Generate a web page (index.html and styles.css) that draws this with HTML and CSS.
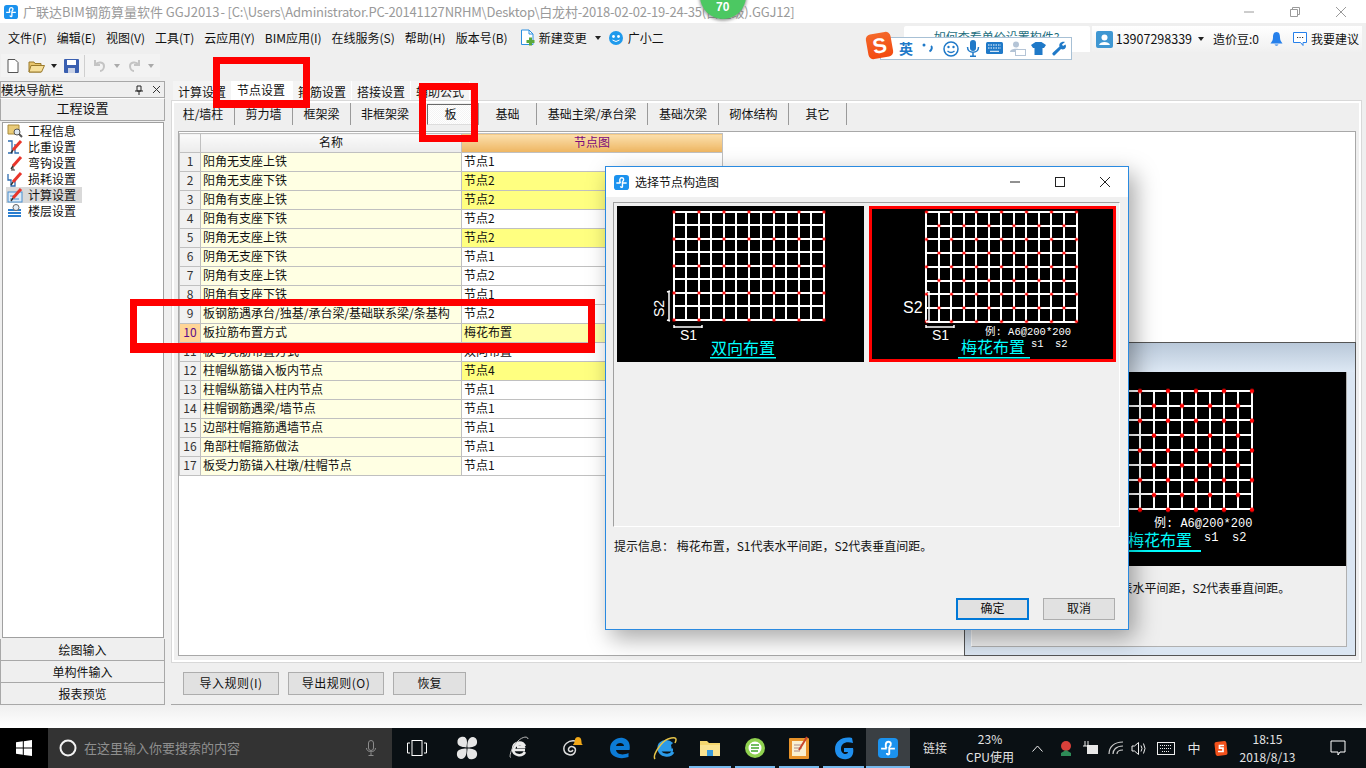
FILE: index.html
```html
<!DOCTYPE html>
<html lang="zh-CN">
<head>
<meta charset="utf-8">
<title>广联达BIM钢筋算量软件 GGJ2013</title>
<link rel="stylesheet" href="styles.css">
</head>
<body>
<svg class="defs" width="0" height="0" aria-hidden="true">
  <defs>
    <symbol id="glodon" viewBox="0 0 16 16">
      <rect width="16" height="16" rx="3" fill="#1b92ee"/>
      <path d="M2.500 8.500H7M7 8.500C5.500 6.500 6 3 8.300 3S11 5.500 9 7M9 7V12.500M9 8.500H13.500M9 12.500C9 13.500 7 13.500 7 12" fill="none" stroke="#fff" stroke-width="1.500"/>
    </symbol>
    <symbol id="pencil" viewBox="0 0 16 16">
      <path d="M6 11L14 2" stroke="#e8352b" stroke-width="3"/>
      <path d="M6 11L4 14" stroke="#333" stroke-width="1.400"/>
    </symbol>
    <pattern id="dotA" x="44.500" y="-7.500" width="25" height="27" patternUnits="userSpaceOnUse"><path d="M11 13.500h3M12.500 12v3" stroke="#f00" stroke-width="1.800"/></pattern>
    <pattern id="dotB" x="51.250" y="-.85" width="25" height="27.400" patternUnits="userSpaceOnUse"><path d="M4.750 6.850h3M6.250 5.350v3M17.250 20.550h3M18.750 19.050v3" stroke="#f00" stroke-width="1.800"/></pattern>
    <pattern id="dotC" x="105" y="11.600" width="28" height="29.700" patternUnits="userSpaceOnUse"><circle cx="7" cy="7.400" r="2.200" fill="#f00"/><circle cx="21" cy="22.250" r="2.200" fill="#f00"/></pattern>
  </defs>
</svg>

<div class="app">
  <header class="titlebar">
    <svg class="app-ico"><use href="#glodon"/></svg>
    <span class="title-text">广联达BIM钢筋算量软件 GGJ2013 <span class="title-path">- [C:\Users\Administrator.PC-20141127NRHM\Desktop\白龙村-2018-02-02-19-24-35(白金级).GGJ12]</span></span>
    <div class="winctl">
      <svg width="12" height="12" viewBox="0 0 12 12"><path d="M1 6H11" stroke="#9a9a9a"/></svg>
      <svg width="12" height="12" viewBox="0 0 12 12"><path d="M1.500 3.500H8.500V10.500H1.500ZM3.500 3.500V1.500H10.500V8.500H8.500" fill="none" stroke="#9a9a9a"/></svg>
      <svg width="12" height="12" viewBox="0 0 12 12"><path d="M1 1L11 11M11 1L1 11" stroke="#9a9a9a"/></svg>
    </div>
  </header>

  <nav class="menubar">
    <div class="menu">
      <span>文件(F)</span><span>编辑(E)</span><span>视图(V)</span><span>工具(T)</span><span>云应用(Y)</span><span>BIM应用(I)</span><span>在线服务(S)</span><span>帮助(H)</span><span>版本号(B)</span>
    </div>
    <div class="menu-extra change">
      <svg width="15" height="17" viewBox="0 0 15 17"><path d="M1.500 1H9L13 5V15.500H1.500Z" fill="#fff" stroke="#2b8fe0"/><path d="M9 1V5H13" fill="none" stroke="#2b8fe0"/><path d="M9 8.500h3v2.500h2.500v3H12v2.500H9V14H6.500v-3H9Z" fill="#5aa83a"/></svg>
      <span>新建变更</span><i class="caret"></i>
    </div>
    <div class="menu-extra xiao">
      <svg width="16" height="16" viewBox="0 0 16 16"><circle cx="8" cy="8" r="7" fill="#1f9aec"/><circle cx="5.500" cy="6.500" r="1.400" fill="#fff"/><circle cx="10.500" cy="6.500" r="1.400" fill="#fff"/><path d="M4.500 10Q8 13 11.500 10" stroke="#fff" fill="none"/></svg>
      <span>广小二</span>
    </div>
    <div class="tip"><span>如何查看单价设置构件?</span></div>
    <div class="user">
      <svg width="17" height="17" viewBox="0 0 17 17"><rect width="17" height="17" rx="2" fill="#3f97d2"/><circle cx="8.500" cy="6.500" r="3" fill="#fff"/><path d="M3 14C4 10 13 10 14 14Z" fill="#fff"/></svg>
      <span class="phone">13907298339</span><i class="caret"></i>
      <span class="beans">造价豆:0</span>
      <svg class="bell" width="13" height="16" viewBox="0 0 13 16"><path d="M6.500 1C3.500 1 3 4 3 6.500S2 10.500 .5 12.500H12.500C11 10.500 10 9 10 6.500S9.500 1 6.500 1Z" fill="#2680eb"/><path d="M4.500 13.500Q6.500 16 8.500 13.500Z" fill="#2680eb"/></svg>
      <svg class="chat" width="16" height="16" viewBox="0 0 16 16"><path d="M1.500 1.500H14.500V11.500H11V14.500L8.500 11.500H1.500Z" fill="#fff" stroke="#2680eb"/><path d="M5 6.500h1.200M7.500 6.500h1.200M10 6.500h1.200" stroke="#333"/></svg>
      <span>我要建议</span>
    </div>
  </nav>

  <div class="toolbar">
    <div class="tools">
      <svg width="12" height="14" viewBox="0 0 12 14"><path d="M1 .5H8L11 3.500V13.500H1Z" fill="#fff" stroke="#555"/></svg>
      <svg class="t-open" width="17" height="14" viewBox="0 0 17 14"><path d="M1 3H6L7 4.500H13V13H1Z" fill="#e8c56d" stroke="#9a7a2c"/><path d="M3 6.500H16.500L13.500 13H1Z" fill="#f6df9a" stroke="#9a7a2c"/></svg>
      <i class="caret t-c1"></i>
      <svg class="t-save" width="15" height="14" viewBox="0 0 15 14"><rect width="15" height="14" rx="1" fill="#3a5fb0"/><rect x="3" y="1" width="9" height="5" fill="#fff"/><rect x="4" y="9" width="7" height="5" fill="#c9d2e6"/></svg>
      <span class="t-sep"></span>
      <svg class="t-undo" width="13" height="13" viewBox="0 0 13 13"><path d="M2 1V6H7M2 6C5 2 11 3 11 7C11 10 9 12 7 12" fill="none" stroke="#c4c4c4" stroke-width="2"/></svg>
      <i class="caret t-off t-c2"></i>
      <svg class="t-redo" width="13" height="13" viewBox="0 0 13 13"><path d="M11 1V6H6M11 6C8 2 2 3 2 7C2 10 4 12 6 12" fill="none" stroke="#c4c4c4" stroke-width="2"/></svg>
      <i class="caret t-off t-c3"></i>
    </div>
  </div>

  <main class="main">
    <aside class="nav">
      <div class="nav-head"><span>模块导航栏</span>
        <svg class="pin" width="10" height="10" viewBox="0 0 10 10"><path d="M3 1H7V6H3ZM1 6H9M5 6V10" fill="none" stroke="#222"/></svg>
        <svg width="9" height="9" viewBox="0 0 9 9"><path d="M1 1L8 8M8 1L1 8" stroke="#333"/></svg>
      </div>
      <div class="nav-btn">工程设置</div>
      <ul class="tree">
        <li><svg width="16" height="16" viewBox="0 0 16 16"><path d="M1 2H12V11H1Z" fill="#e9cb78" stroke="#a98a3a"/><circle cx="10" cy="9" r="3" fill="#dfe9f3" stroke="#555"/><path d="M12 11L15 14" stroke="#555" stroke-width="2"/></svg>工程信息</li>
        <li><svg width="16" height="16" viewBox="0 0 16 16"><path d="M1 2H5V14H1M12 14H8V5" fill="none" stroke="#2d6cb0" stroke-width="1.300"/><use href="#pencil"/></svg>比重设置</li>
        <li><svg width="16" height="16" viewBox="0 0 16 16"><path d="M6 10V15M4 15H8" stroke="#333"/><use href="#pencil"/></svg>弯钩设置</li>
        <li><svg width="16" height="16" viewBox="0 0 16 16"><path d="M1 3V9H4V15H8V9" fill="none" stroke="#2d6cb0" stroke-width="1.300"/><use href="#pencil"/></svg>损耗设置</li>
        <li class="sel"><svg width="16" height="16" viewBox="0 0 16 16"><rect x="1" y="5" width="14" height="10" fill="#dcebf8" stroke="#4a90d0"/><path d="M3 9H9M3 12H12" stroke="#4a90d0"/><use href="#pencil"/></svg>计算设置</li>
        <li><svg width="16" height="16" viewBox="0 0 16 16"><path d="M1 7H14M1 10H14M1 13H14" stroke="#2a7ed0" stroke-width="2"/><circle cx="9" cy="4.500" r="3" fill="#e6eef6" stroke="#666"/></svg>楼层设置</li>
      </ul>
      <div class="nav-foot">绘图输入</div>
      <div class="nav-foot">单构件输入</div>
      <div class="nav-foot">报表预览</div>
    </aside>

    <section class="content">
      <div class="tabs">
        <span class="tab">计算设置</span><span class="tab active">节点设置</span><span class="tab">箍筋设置</span><span class="tab">搭接设置</span><span class="tab">辅助公式</span>
      </div>
      <div class="tabpanel">
        <div class="subtabs">
          <span>柱/墙柱</span><span>剪力墙</span><span>框架梁</span><span>非框架梁</span><span><b class="sub-active">板</b></span><span>基础</span><span>基础主梁/承台梁</span><span>基础次梁</span><span>砌体结构</span><span>其它</span>
        </div>
        <div class="sheet">
          <table class="grid">
            <colgroup><col class="c-no"><col class="c-name"><col class="c-val"></colgroup>
            <thead><tr><th></th><th>名称</th><th class="h-val">节点图</th></tr></thead>
            <tbody>
              <tr><td>1</td><td>阳角无支座上铁</td><td>节点1</td></tr>
              <tr><td>2</td><td>阳角无支座下铁</td><td class="y">节点2</td></tr>
              <tr><td>3</td><td>阳角有支座上铁</td><td class="y">节点2</td></tr>
              <tr><td>4</td><td>阳角有支座下铁</td><td>节点2</td></tr>
              <tr><td>5</td><td>阴角无支座上铁</td><td class="y">节点2</td></tr>
              <tr><td>6</td><td>阴角无支座下铁</td><td>节点1</td></tr>
              <tr><td>7</td><td>阴角有支座上铁</td><td>节点2</td></tr>
              <tr><td>8</td><td>阴角有支座下铁</td><td>节点1</td></tr>
              <tr><td>9</td><td>板钢筋遇承台/独基/承台梁/基础联系梁/条基构</td><td>节点2</td></tr>
              <tr class="cur"><td>10</td><td>板拉筋布置方式</td><td class="ly">梅花布置</td></tr>
              <tr><td>11</td><td>板马凳筋布置方式</td><td>双向布置</td></tr>
              <tr><td>12</td><td>柱帽纵筋锚入板内节点</td><td class="y">节点4</td></tr>
              <tr><td>13</td><td>柱帽纵筋锚入柱内节点</td><td>节点1</td></tr>
              <tr><td>14</td><td>柱帽钢筋遇梁/墙节点</td><td>节点1</td></tr>
              <tr><td>15</td><td>边部柱帽箍筋遇墙节点</td><td>节点1</td></tr>
              <tr><td>16</td><td>角部柱帽箍筋做法</td><td>节点1</td></tr>
              <tr><td>17</td><td>板受力筋锚入柱墩/柱帽节点</td><td>节点1</td></tr>
            </tbody>
          </table>

          <div class="backwin">
            <div class="backwin-title"></div>
            <div class="backwin-body">
              <svg class="back-img" width="374" height="194" viewBox="0 0 374 194">
                <rect width="374" height="194" fill="#000"/>
                <path d="M112 19V137M126 19V137M140 19V137M154 19V137M168 19V137M182 19V137M196 19V137M210 19V137M224 19V137M238 19V137M252 19V137M266 19V137M280 19V137M112 19H280M112 34H280M112 48H280M112 63H280M112 78H280M112 93H280M112 108H280M112 122H280M112 137H280" stroke="#fff" stroke-width="2"/>
                <rect x="105" y="11.600" width="182" height="133.700" fill="url(#dotC)"/>
                <text class="pic-w" x="182" y="155">例: A6@200*200</text>
                <text class="pic-w" x="232" y="169">s1</text><text class="pic-w" x="260" y="169">s2</text>
                <text class="pic-c" x="156" y="174">梅花布置</text>
                <rect x="120" y="178" width="109" height="2" fill="#0ff"/>
              </svg>
              <p class="hint hint-back">提示信息： 梅花布置，S1代表水平间距，S2代表垂直间距。</p>
            </div>
          </div>
        </div>
      </div>
      <div class="actions">
        <button class="btn b-wide">导入规则(I)</button>
        <button class="btn b-wide">导出规则(O)</button>
        <button class="btn b-mid">恢复</button>
      </div>
    </section>
  </main>
  <div class="foot-fade"></div>

  <footer class="taskbar">
    <div class="start"><svg width="16" height="16" viewBox="0 0 16 16"><path d="M0 2.300L6.800 1.300V7.600H0ZM7.800 1.200L16 0V7.600H7.800ZM0 8.500H6.800V14.800L0 13.800ZM7.800 8.500H16V16L7.800 14.900Z" fill="#fff"/></svg></div>
    <div class="search">
      <svg width="20" height="20" viewBox="0 0 20 20"><circle cx="10" cy="10" r="7.500" fill="none" stroke="#f2f2f2" stroke-width="2"/></svg>
      <span>在这里输入你要搜索的内容</span>
      <svg class="s-mic" width="10" height="16" viewBox="0 0 10 16"><rect x="2.500" y=".5" width="5" height="10" rx="2.500" fill="none" stroke="#8c8c8c"/><path d="M.5 8C.5 13 9.500 13 9.500 8M5 12.500V15.500M2.500 15.500H7.500" fill="none" stroke="#8c8c8c"/></svg>
    </div>
    <div class="apps">
      <div><svg width="20" height="16" viewBox="0 0 20 16"><rect x="5" y=".5" width="10" height="15" fill="none" stroke="#fff"/><path d="M3 3H.5V13H3M17 3H19.500V13H17" fill="none" stroke="#fff"/></svg></div>
      <div><svg width="22" height="24" viewBox="0 0 22 24"><path d="M5 1C9 0 11 2 11 6C11 8 10.500 10 10.500 11.500C8 11 2 11 1.500 7C1 4 2.500 1.500 5 1ZM17 1C20 1.500 21.500 4 21 7C20.500 10.500 16 11.500 11.500 11.500C11 8 11.500 1 17 1ZM11.500 12.500C16 12.500 20.500 13.500 21 17C21.500 20 20 22.500 17 23C13 24 11 22 11 18C11 16 11.500 14 11.500 12.500ZM10.500 12.500C11 16 10.500 23 5 23C2 22.500 .5 20 1 17C1.500 13.500 6 12.500 10.500 12.500Z" fill="#e6e6e6"/></svg></div>
      <div><svg width="22" height="24" viewBox="0 0 22 24"><path d="M17 14H6C6 8 15 6 16 11H9M17 16C14 21 5 20 5 13S14 4 17 10" fill="none" stroke="#ececec" stroke-width="2.500"/><path d="M3 21C1 23 2 14 8 7S20 0 20 3" fill="none" stroke="#bbb"/></svg></div>
      <div class="spiral"><svg width="24" height="24" viewBox="0 0 24 24"><path d="M16 5C9 4 4 9 5 14S14 21 16 16 12 9 10 12 12 17 14 14" fill="none" stroke="#ddd" stroke-width="1.500"/><path d="M19 1C16 1 16 4 15.500 6S14 8 14 9H24C23 8 22.500 8 22.500 6S22 1 19 1Z" fill="#f2a818"/></svg></div>
      <div><svg width="22" height="22" viewBox="0 0 22 22"><path d="M20.500 13H7C7.500 17 13 19 19.500 16V20C11 23 1 20 1 12S8 0 14 1 21.500 8 20.500 13ZM7 9H15C15 5 7.500 5 7 9Z" fill="#0c7bd6"/></svg></div>
      <div><svg width="26" height="26" viewBox="0 0 26 26"><path d="M21 15H9C9 8 18 8 18 12H10M21 17C18 22 8 21 7 14S15 4 20 9" fill="none" stroke="#2b9ae8" stroke-width="3"/><path d="M3 24C0 20 10 6 16 4S26 2 23 8" fill="none" stroke="#e4c34a" stroke-width="1.500"/></svg></div>
      <div class="run"><svg width="22" height="18" viewBox="0 0 22 18"><path d="M1 2H8L10 4H21V17H1Z" fill="#f5d76e"/><rect x="1" y="6" width="20" height="11" fill="#fbe491"/><rect x="8" y="11" width="6" height="6" fill="#3a9bdc"/></svg></div>
      <div class="run"><svg width="24" height="24" viewBox="0 0 24 24"><circle cx="12" cy="12" r="10" fill="#8fd14f"/><circle cx="12" cy="12" r="6.500" fill="#fff"/><path d="M8 12H16M8 9H16M8 15H15" stroke="#43a82e" stroke-width="1.500"/></svg></div>
      <div class="run"><svg width="22" height="24" viewBox="0 0 22 24"><rect x="1" y="2" width="20" height="21" rx="1" fill="#e8932a"/><rect x="4" y="5" width="14" height="15" fill="#faf0d0"/><path d="M6 9H14M6 12H14M6 15H12" stroke="#a88"/><path d="M19 1L11 14" stroke="#c8442c" stroke-width="2"/></svg></div>
      <div class="run"><svg width="22" height="26" viewBox="0 0 22 26"><path d="M19 3C10 1 2 6 2 14S8 25 14 24 21 17 20 13H11V17H15C15 20 8 20 8 14S13 6 20 8Z" fill="#1f8fee"/></svg></div>
      <div class="run cur-app"><svg width="20" height="20"><use href="#glodon"/></svg></div>
    </div>
    <div class="tray">
      <span class="t-link">链接</span>
      <span class="t-cpu">23%<br>CPU使用</span>
      <span><svg width="11" height="7" viewBox="0 0 11 7"><path d="M.5 6.500L5.500 1L10.500 6.500" fill="none" stroke="#eee"/></svg></span>
      <span><svg width="14" height="18" viewBox="0 0 14 18"><circle cx="7" cy="7" r="5" fill="#d9403a"/><path d="M2 14L7 11L12 14V17H2Z" fill="#2e8b57"/></svg></span>
      <span><svg width="16" height="14" viewBox="0 0 16 14"><rect x="4" y="4" width="11" height="9" fill="#e8e8e8"/><path d="M2 0V5M5 0V5M0 5H7" stroke="#eee"/></svg></span>
      <span><svg width="16" height="14" viewBox="0 0 16 14"><path d="M1 13C1 6 6 1 15 1M5 13C5 9 8 5 15 5M9 13C9 11 11 9 15 9" fill="none" stroke="#ccc" stroke-width="1.200"/></svg></span>
      <span><svg width="16" height="15" viewBox="0 0 16 15"><path d="M1 5H3.500L7.500 1.500V13.500L3.500 10H1ZM10 4.500Q12 7.500 10 10.500M12.500 2.500Q15.500 7.500 12.500 12.500" fill="none" stroke="#eee"/></svg></span>
      <span><svg width="18" height="13" viewBox="0 0 18 13"><rect x=".5" y=".5" width="17" height="12" fill="none" stroke="#eee"/><path d="M3 3.500h12M3 6.500h12M5 9.500h8" stroke="#eee" stroke-dasharray="1 1"/></svg></span>
      <span class="t-zh">中</span>
      <span><svg width="14" height="15" viewBox="0 0 14 15"><rect x="1" y=".5" width="12" height="14" rx="2" fill="#f2511b" transform="rotate(-6 7 7.500)"/><path d="M10 4.500H5.500V7.200H9V10.500H4" fill="none" stroke="#fff" stroke-width="1.700"/></svg></span>
      <span class="t-clock">18:15<br>2018/8/13</span>
      <span class="t-notif"><svg width="16" height="16" viewBox="0 0 16 16"><path d="M1 1H15V12H10L8 15V12H1Z" fill="none" stroke="#fff"/></svg></span>
    </div>
  </footer>

  <!-- floating overlays -->
  <div class="badge"><span>70</span></div>

  <div class="ime">
    <span class="ime-s">S</span>
    <span class="ime-item ime-ying">英</span>
    <svg class="ime-item" width="14" height="14" viewBox="0 0 14 14"><circle cx="3" cy="4" r="1.500" fill="#1f79c8"/><path d="M10 5C11.500 6 11 9 8.500 10.500" fill="none" stroke="#1f79c8" stroke-width="2"/></svg>
    <svg class="ime-item" width="16" height="16" viewBox="0 0 16 16"><circle cx="8" cy="8" r="7" fill="none" stroke="#1f79c8" stroke-width="1.500"/><circle cx="5.500" cy="6" r="1.200" fill="#1f79c8"/><circle cx="10.500" cy="6" r="1.200" fill="#1f79c8"/><path d="M4.500 10Q8 13 11.500 10" fill="none" stroke="#1f79c8" stroke-width="1.300"/></svg>
    <svg class="ime-item" width="14" height="17" viewBox="0 0 14 17"><rect x="4" y="0" width="6" height="11" rx="3" fill="#1f79c8"/><path d="M1.500 7C1.500 14 12.500 14 12.500 7M7 12.500V16M4 16.300H10" fill="none" stroke="#1f79c8" stroke-width="1.500"/></svg>
    <svg class="ime-item" width="17" height="12" viewBox="0 0 17 12"><rect width="17" height="12" rx="1.500" fill="#1f79c8"/><path d="M2 3h13M2 6h13" stroke="#fff" stroke-dasharray="1.500 1"/><path d="M4 9.300h9" stroke="#fff"/></svg>
    <svg class="ime-item" width="17" height="15" viewBox="0 0 17 15"><circle cx="7" cy="3.500" r="3" fill="#b4c4d6"/><path d="M1 11C1 7 10 7 11 9V11Z" fill="#b4c4d6"/><rect x="6.500" y="8.500" width="10" height="6" fill="#fff" stroke="#b4c4d6"/></svg>
    <svg class="ime-item" width="15" height="13" viewBox="0 0 15 13"><path d="M4.500 0H10.500L15 3L13 6H11.500V13H3.500V6H2L0 3Z" fill="#1f79c8"/></svg>
    <svg class="ime-item" width="15" height="15" viewBox="0 0 15 15"><path d="M1 14C0 13 0 12.500 1 11.500L7.500 5.500C6.500 2.500 9.500 0 13 1L10 3.500L11 5L13.500 3.500C15 6.500 12.500 9.500 9 8L3 14C2.300 14.800 1.700 14.800 1 14Z" fill="#1f79c8"/></svg>
  </div>

  <div class="mark mark-a"></div>
  <div class="mark mark-b"></div>
  <div class="mark mark-c"></div>

  <div class="dialog">
    <div class="dlg-title">
      <svg class="dlg-ico"><use href="#glodon"/></svg>
      <span>选择节点构造图</span>
      <div class="dlg-ctl">
        <svg width="12" height="12" viewBox="0 0 12 12"><path d="M1 6H11" stroke="#222"/></svg>
        <svg width="12" height="12" viewBox="0 0 12 12"><rect x="1.500" y="1.500" width="9" height="9" fill="none" stroke="#222"/></svg>
        <svg width="12" height="12" viewBox="0 0 12 12"><path d="M1 1L11 11M11 1L1 11" stroke="#222"/></svg>
      </div>
    </div>
    <div class="dlg-frame">
      <div class="thumbs">
        <svg class="thumb" width="247" height="156" viewBox="0 0 247 156">
          <rect width="247" height="156" fill="#000"/>
          <path d="M57 6V114M69 6V114M82 6V114M94 6V114M107 6V114M119 6V114M132 6V114M144 6V114M157 6V114M169 6V114M182 6V114M194 6V114M207 6V114M57 6H207M57 19H207M57 33H207M57 46H207M57 60H207M57 73H207M57 87H207M57 100H207M57 114H207" stroke="#fff" stroke-width="2"/>
          <rect x="50" y="0" width="164" height="120" fill="url(#dotA)"/>
          <path d="M52 85V115M50 86L53 85M50 114L53 115M57 121H85M57 119V122M85 119V122" fill="none" stroke="#fff" stroke-width="1.500"/>
          <text class="pic-s" transform="translate(47 111) rotate(-90)">S2</text>
          <text class="pic-s" x="63" y="134">S1</text>
          <text class="pic-c" x="94" y="148">双向布置</text>
          <rect x="93" y="151" width="66" height="1.500" fill="#0ff"/>
        </svg>
        <svg class="thumb" width="247" height="156" viewBox="0 0 247 156">
          <rect x="1.500" y="1.500" width="244" height="153" fill="#000" stroke="#f00" stroke-width="3"/>
          <path d="M57 6V116M70 6V116M82 6V116M95 6V116M107 6V116M120 6V116M132 6V116M145 6V116M157 6V116M170 6V116M182 6V116M195 6V116M208 6V116M57 6H208M57 20H208M57 33H208M57 47H208M57 61H208M57 75H208M57 88H208M57 102H208M57 116H208" stroke="#fff" stroke-width="2"/>
          <rect x="51" y="0" width="164" height="122" fill="url(#dotB)"/>
          <path d="M60 85V116M57 85L60 86M57 116L60 115M57 121H85M57 119V122M85 119V122" fill="none" stroke="#fff" stroke-width="1.500"/>
          <text class="pic-b" x="34" y="107">S2</text>
          <text class="pic-s" x="63" y="134">S1</text>
          <text class="pic-n" x="116" y="129">例: A6@200*200</text>
          <text class="pic-n" x="162" y="141">s1</text><text class="pic-n" x="186" y="141">s2</text>
          <text class="pic-c" x="92" y="147">梅花布置</text>
          <rect x="89" y="151" width="72" height="1.500" fill="#0ff"/>
        </svg>
      </div>
    </div>
    <p class="hint dlg-hint">提示信息： 梅花布置，S1代表水平间距，S2代表垂直间距。</p>
    <div class="dlg-btns">
      <button class="btn dlg-ok">确定</button>
      <button class="btn dlg-cancel">取消</button>
    </div>
  </div>
</div>
</body>
</html>
```

FILE: styles.css
```css
* { box-sizing: border-box; }
html, body { margin: 0; padding: 0; }
body {
  width: 1366px; height: 768px; overflow: hidden;
  font: 12px/16px "Noto Sans CJK SC", "Liberation Sans", sans-serif;
  color: #111; background: #efefef;
}
.defs { display: block; height: 0; }
svg { display: block; flex: none; }
.app { position: relative; width: 1366px; height: 768px; display: flex; flex-direction: column; overflow: hidden; }

/* title bar */
.titlebar { height: 23px; background: #fff; display: flex; align-items: center; padding-left: 4px; }
.app-ico { width: 14px; height: 14px; }
.title-text { margin-left: 5px; font-size: 13px; color: #9a9a9a; white-space: nowrap; }
.title-path { letter-spacing: -.2px; margin-left: -2px; }
.winctl { margin-left: auto; display: flex; gap: 34px; padding-right: 19px; }

/* menu bar */
.menubar { height: 29px; display: flex; align-items: center; padding-left: 8px; }
.menu { display: flex; gap: 10px; white-space: nowrap; }
.menu-extra { display: flex; align-items: center; }
.change { margin-left: 12px; gap: 4px; }
.caret { display: block; width: 0; height: 0; border: 3px solid transparent; border-top: 4px solid #222; border-bottom: 0; }
.change .caret { margin-left: 4px; }
.xiao { margin-left: 7px; gap: 4px; }
.tip { margin-left: 240px; width: 186px; height: 26px; background: #fff; overflow: hidden; text-align: center; border-radius: 2px 2px 0 0; align-self: flex-end; }
.tip span { color: #1d6e7e; position: relative; top: 3px; }
.user { margin-left: 2px; width: 270px; height: 26px; align-self: flex-end; display: flex; align-items: center; padding-left: 4px; background: linear-gradient(#fff, #f0f0f0); white-space: nowrap; }
.phone { margin-left: 3px; font-size: 12.500px; }
.user .caret { margin-left: 6px; }
.beans { margin-left: 9px; }
.bell { margin-left: 11px; }
.chat { margin-left: 9px; margin-right: 3px; }

/* toolbar */
.toolbar { height: 29px; padding: 2px 0 3px 1px; }
.tools { width: 159px; height: 23px; background: #f3f3f3; display: flex; align-items: center; padding-left: 6px; }
.t-open { margin-left: 9px; }
.t-c1 { margin-left: 6px; }
.t-save { margin-left: 7px; }
.t-sep { margin-left: 5px; width: 1px; height: 22px; background: #cfcfcf; }
.t-undo { margin-left: 8px; }
.t-off { border-top-color: #aaa; }
.t-c2 { margin-left: 8px; }
.t-redo { margin-left: 8px; }
.t-c3 { margin-left: 7px; }

/* main area */
.main { height: 624px; display: flex; align-items: stretch; }
.nav { width: 165px; display: flex; flex-direction: column; }
.nav-head { height: 17px; border: 1px solid #a8a8a8; display: flex; align-items: center; line-height: 15px; font-size: 12.500px; }
.pin { margin-left: auto; margin-right: 8px; }
.nav-head svg:last-child { margin-right: 3px; }
.nav-btn { height: 23px; border: 1px solid #a8a8a8; border-top-color: #fff; line-height: 17px; text-align: center; font-size: 13px; background: #efefef; }
.tree { flex: 1; list-style: none; margin: 1px 1px 1px 2px; padding: 0 0 0 3px; background: #fff; border: 1px solid #a0a0a0; }
.tree li { height: 16px; display: flex; align-items: center; gap: 5px; width: 76px; white-space: nowrap; }
.tree li svg { width: 16px; height: 16px; margin-left: 1px; }
.tree .sel { background: #d9d9d9; }
.nav-foot { height: 22px; border: 1px solid #a8a8a8; border-top: 0; line-height: 21px; text-align: center; background: #efefef; }

.content { width: 1191px; margin-left: 6px; display: flex; flex-direction: column; }
.tabs { height: 19px; display: flex; padding-left: 2px; white-space: nowrap; }
.tab { width: 59px; padding: 3px 0 0 5px; height: 19px; background: #f4f4f4; border-right: 1px solid #fff; line-height: 16px; }
.tab.active { width: 62px; background: #fff; padding: 1px 0 0 6px; margin-left: -1px; }
.tabpanel { height: 563px; background: #efefef; border: 1px solid #d8d8d8; box-shadow: inset 0 0 0 2px #fff; padding: 2px 5px 6px 0; display: flex; flex-direction: column; }
.subtabs { height: 22px; margin-bottom: 6px; display: grid; grid-template-columns: 63px 58px 58px 69px 59px 58px 111px 71px 70px 58px; justify-content: start; }
.subtabs span { display: flex; align-items: center; justify-content: center; border-right: 1px solid #9a9a9a; white-space: nowrap; }
.sub-active { font-weight: 400; width: 45px; height: 21px; padding-left: 3px; display: flex; align-items: center; justify-content: center; border: 1px solid; border-color: #6a6a6a #ddd #ddd #6a6a6a; background: repeating-conic-gradient(#f4f4f4 0 25%, #fff 0 50%) 0 0 / 2px 2px; }
.sheet { position: relative; flex: 1; margin-left: 6px; background: #fff; border: 1px solid #a8a8a8; }

.grid { width: 543px; table-layout: fixed; border-collapse: collapse; margin-top: 1px; }
.c-no { width: 21px; } .c-name { width: 261px; } .c-val { width: 261px; }
.grid th { height: 19px; padding: 0 0 3px; line-height: 14px; font-weight: 400; background: linear-gradient(#fafafa, #ececec); border: 1px solid #c0c0c0; }
.grid .h-val { background: linear-gradient(#fbe0ae, #eeb560); color: #7a0a7a; }
.grid td { height: 19px; padding: 0 0 4px 2px; border: 1px solid #c0c0c0; white-space: nowrap; overflow: hidden; line-height: 13px; }
.grid td:nth-child(1) { background: #f1f1f1; text-align: center; padding: 0 0 4px; color: #333; }
.grid td:nth-child(2) { background: #ffffe3; }
.grid td.y { background: #ffff80; }
.grid td.ly { background: #ffffa8; }
.grid .cur td:nth-child(1) { background: #ffd596; color: #5a0a8a; }

.backwin { position: absolute; right: -1px; bottom: -1px; width: 392px; height: 314px; border: 1px solid #555; background: #dbe6f2; display: flex; flex-direction: column; padding: 0 8px 8px 6px; }
.backwin-title { height: 29px; margin: 0 -8px 0 -6px; background: linear-gradient(#b9c8d9, #dde8f4); }
.backwin-body { flex: 1; background: #efefef; border: 1px solid #b0b0b0; border-top: 0; border-left-color: #fff; }
.hint { margin: 0; white-space: nowrap; }
.hint-back { margin: 14px 0 0; }
.pic-c { fill: #0ff; font-size: 16px; }
.pic-w { fill: #fff; font: 12px "Liberation Mono", "Noto Sans CJK SC", monospace; }
.pic-n { fill: #fff; font: 10.500px "Liberation Mono", "Noto Sans CJK SC", monospace; }
.pic-s { fill: #fff; font: 14px "Liberation Sans", sans-serif; }
.pic-b { fill: #fff; font: 16px "Liberation Sans", sans-serif; }

.actions { height: 42px; padding: 9px 0 0 12px; display: flex; gap: 9px; align-items: flex-start; border-bottom: 1px solid #a8a8a8; }
.btn { height: 23px; padding: 0 0 2px; font: inherit; color: #111; background: #e1e1e1; border: 1px solid #adadad; border-radius: 0; }
.b-wide { width: 96px; letter-spacing: .5px; }
.b-mid { width: 73px; }

.foot-fade { height: 23px; background: linear-gradient(#efefef, #fff); }

/* taskbar */
.taskbar { height: 40px; background: #0a1014; color: #e4e4e4; display: flex; align-items: stretch; }
.start { width: 48px; background: #000; display: flex; align-items: center; justify-content: center; }
.search { width: 344px; background: #333; display: flex; align-items: center; padding-left: 10px; color: #8f8f8f; font-size: 13px; }
.search span { margin-left: 6px; }
.s-mic { margin-left: auto; margin-right: 16px; }
.apps { display: grid; grid-template-columns: 49px 51px 53px 51px 47px 44px 46px 44px 44px 45px 44px; }
.apps > div { display: flex; align-items: center; justify-content: center; }
.apps .run { box-shadow: inset 0 -2px 0 #76b9ed; margin: 0 2px; }
.apps .cur-app { margin: 0; background: #3a3f43; }
.tray { flex: 1; display: grid; grid-template-columns: 50px 60px 34px 24px 26px 23px 24px 30px 26px 28px 65px 1fr; }
.tray > span { display: flex; align-items: center; justify-content: center; text-align: center; }
.t-link { color: #ddd; }
.t-cpu, .t-clock { line-height: 18px; }
.t-zh { font-size: 13px; }
.t-notif { padding-left: 10px; }

/* overlays */
.badge { position: absolute; left: 700px; top: -27px; width: 46px; height: 46px; border-radius: 50%; background: #4cc862; box-shadow: 0 1px 3px 1px rgba(90,90,90,.55); color: #fff; font: 700 12px "Liberation Sans", sans-serif; }
.badge span { position: absolute; left: 16px; top: 27px; }

.ime { position: absolute; left: 880px; top: 37px; width: 192px; height: 23px; background: #fff; border: 1px solid #a7c0d5; display: flex; align-items: center; }
.ime-s { position: absolute; left: -14px; top: -5px; width: 25px; height: 25px; border-radius: 5px; background: linear-gradient(#f4682a, #f34a10); color: #fff; font: 700 21px/25px "Liberation Sans", sans-serif; text-align: center; transform: rotate(-10deg); }
.ime-item { position: absolute; top: 3px; }
.ime-ying { left: 18px; top: 2px; color: #1f79c8; font-size: 14px; font-weight: 700; }
.ime svg:nth-of-type(1) { left: 40px; }
.ime svg:nth-of-type(2) { left: 62px; }
.ime svg:nth-of-type(3) { left: 85px; top: 2px; }
.ime svg:nth-of-type(4) { left: 105px; top: 4px; }
.ime svg:nth-of-type(5) { left: 128px; }
.ime svg:nth-of-type(6) { left: 150px; top: 4px; }
.ime svg:nth-of-type(7) { left: 171px; }

.mark { position: absolute; border: 7px solid #f00; }
.mark-a { left: 213px; top: 57px; width: 97px; height: 51px; border-bottom-width: 8px; }
.mark-b { left: 419px; top: 83px; width: 59px; height: 59px; }
.mark-c { left: 130px; top: 299px; width: 465px; height: 54px; border-bottom-width: 10px; }

.dialog { position: absolute; left: 605px; top: 166px; width: 524px; height: 464px; background: #f0f0f0; border: 1px solid #2a8ae0; box-shadow: 6px 8px 22px rgba(0,0,0,.35); display: flex; flex-direction: column; }
.dlg-title { height: 30px; background: #fff; display: flex; align-items: center; padding-left: 8px; }
.dlg-ico { width: 15px; height: 15px; margin-right: 6px; }
.dlg-ctl { margin-left: auto; display: flex; gap: 33px; padding-right: 17px; }
.dlg-frame { margin: 5px 8px 0 7px; height: 325px; padding: 3px; border: 1px solid; border-color: #a0a0a0 #fff #fff #a0a0a0; }
.thumbs { display: flex; gap: 5px; }
.dlg-hint { margin: 10px 0 0 8px; line-height: 18px; }
.dlg-btns { margin-top: auto; display: flex; justify-content: flex-end; gap: 14px; padding: 0 13px 9px 0; }
.dlg-ok { width: 73px; height: 22px; border: 2px solid #0078d7; }
.dlg-cancel { width: 72px; height: 22px; }
```
